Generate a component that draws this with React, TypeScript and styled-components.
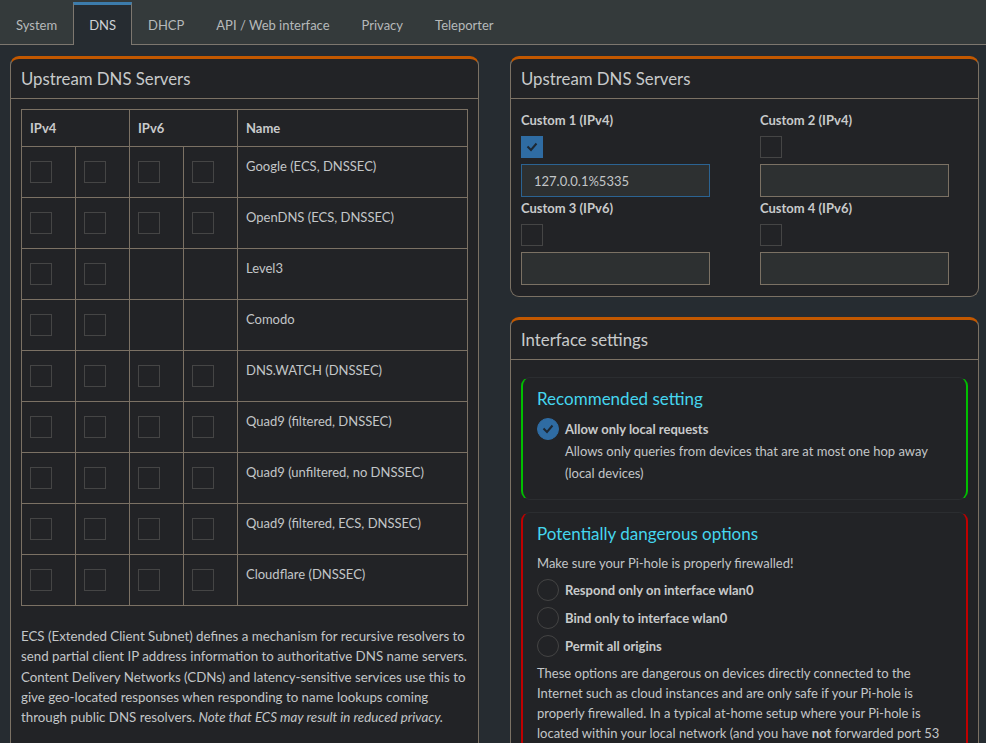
import React from 'react';
import styled, { createGlobalStyle } from 'styled-components';

const GlobalStyle = createGlobalStyle`
  body {
    margin: 0;
    background: #262c31;
    color: #c3c6c8;
    font-family: Lato, "Open Sans", sans-serif;
    font-size: 13px;
  }
`;

const TabBar = styled.div`
  display: flex;
  height: 45px;
  box-sizing: border-box;
  padding-top: 2px;
  background: #343a3b;
  border-bottom: 1px solid #7d776f;
`;

const Tab = styled.div<{ active?: boolean }>`
  display: flex;
  align-items: center;
  padding: 0 15px;
  margin-bottom: -1px;
  font-size: 13px;
  color: ${(p) => (p.active ? '#cdd2d6' : '#b6b9ba')};
  background: ${(p) => (p.active ? '#262c31' : 'transparent')};
  border-top: 3px solid ${(p) => (p.active ? '#3c7cac' : 'transparent')};
  border-left: 1px solid ${(p) => (p.active ? '#7d776f' : 'transparent')};
  border-right: 1px solid ${(p) => (p.active ? '#7d776f' : 'transparent')};
`;

const Content = styled.div`
  display: grid;
  grid-template-columns: 469px 469px;
  gap: 31px;
  padding: 11px 10px;
  align-items: start;
`;

const Column = styled.div`
  display: flex;
  flex-direction: column;
  gap: 20px;
`;

const Card = styled.div`
  background: #222326;
  border: 1px solid #7b7164;
  border-top: 3px solid #c25800;
  border-radius: 9px;
`;

const CardHeader = styled.div`
  height: 39px;
  display: flex;
  align-items: center;
  padding: 0 10px;
  font-size: 16.8px;
  color: #c8cacb;
  border-bottom: 1px solid #7b7164;
`;

const CardBody = styled.div<{ pt?: number; pb?: number }>`
  padding: ${(p) => p.pt ?? 10}px 10px ${(p) => p.pb ?? 10}px;
`;

const Table = styled.table`
  width: 100%;
  border-collapse: collapse;
  border: 1px solid #7b7164;
`;

const Th = styled.th`
  text-align: left;
  font-weight: 700;
  padding: 0 8px;
  height: 36px;
  border: 1px solid #7b7164;
  color: #c8cacb;
`;

const CheckCell = styled.td`
  width: 37px;
  padding: 14px 8px;
  border: 1px solid #7b7164;
  vertical-align: top;
`;

const NameCell = styled.td`
  padding: 9px 8px;
  border: 1px solid #7b7164;
  vertical-align: top;
  line-height: 20px;
`;

const Box = styled.div<{ checked?: boolean }>`
  width: 22px;
  height: 22px;
  box-sizing: border-box;
  border: 1px solid ${(p) => (p.checked ? '#2f6ca3' : '#454545')};
  background: ${(p) => (p.checked ? '#2f6ca3' : 'transparent')};
  display: flex;
  align-items: center;
  justify-content: center;
`;

const Note = styled.p`
  margin: 20px 0 0;
  font-size: 13.3px;
  line-height: 20.3px;
`;

const CustomGrid = styled.div`
  display: grid;
  grid-template-columns: 239px 1fr;
  row-gap: 1px;
`;

const CustomField = styled.div`
  display: flex;
  flex-direction: column;
  gap: 6px;
`;

const Label = styled.div`
  font-weight: 700;
  line-height: 20px;
  color: #c8cacb;
`;

const Input = styled.div<{ focused?: boolean }>`
  width: 189px;
  height: 33px;
  box-sizing: border-box;
  background: #2d3031;
  border: 1px solid ${(p) => (p.focused ? '#2b6392' : '#7b7164')};
  display: flex;
  align-items: center;
  padding: 0 12px;
  color: #c3c6c8;
`;

const OptionBox = styled.div<{ tone: string }>`
  border: 1px solid #2b2d30;
  border-left: 2px solid ${(p) => p.tone};
  border-right: 2px solid ${(p) => p.tone};
  border-radius: 9px;
  padding: 10px 14px 9px;
`;

const OptionTitle = styled.div`
  font-size: 17px;
  line-height: 22px;
  color: #45d6ee;
  margin-bottom: 8px;
`;

const Radio = styled.div<{ first?: boolean }>`
  display: grid;
  grid-template-columns: 22px 1fr;
  column-gap: 6px;
  align-items: center;
  margin-top: ${(p) => (p.first ? 3 : 0)}px;
  margin-bottom: 6px;
`;

const Circle = styled.div<{ checked?: boolean }>`
  width: 22px;
  height: 22px;
  box-sizing: border-box;
  border-radius: 50%;
  border: 1px solid ${(p) => (p.checked ? '#2f6ca3' : '#444')};
  background: ${(p) => (p.checked ? '#2f6ca3' : 'transparent')};
  display: flex;
  align-items: center;
  justify-content: center;
`;

const RadioLabel = styled.div`
  font-weight: 700;
  line-height: 22px;
  color: #c8cacb;
`;

const RadioDesc = styled.div`
  grid-column: 2;
  line-height: 22px;
`;

const Text = styled.div<{ mb?: number }>`
  line-height: 20px;
  margin-bottom: ${(p) => p.mb ?? 0}px;
`;

const Spacer = styled.div`
  height: 12px;
`;

const Tick = () => (
  <svg width="12" height="10" viewBox="0 0 12 10">
    <polyline points="1.5,4.5 5,8 10.5,1.5" fill="none" stroke="#1d2834" strokeWidth="2" />
  </svg>
);

const servers: { name: string; v6: boolean }[] = [
  { name: 'Google (ECS, DNSSEC)', v6: true },
  { name: 'OpenDNS (ECS, DNSSEC)', v6: true },
  { name: 'Level3', v6: false },
  { name: 'Comodo', v6: false },
  { name: 'DNS.WATCH (DNSSEC)', v6: true },
  { name: 'Quad9 (filtered, DNSSEC)', v6: true },
  { name: 'Quad9 (unfiltered, no DNSSEC)', v6: true },
  { name: 'Quad9 (filtered, ECS, DNSSEC)', v6: true },
  { name: 'Cloudflare (DNSSEC)', v6: true },
];

const tabs = ['System', 'DNS', 'DHCP', 'API / Web interface', 'Privacy', 'Teleporter'];

const customs = [
  { label: 'Custom 1 (IPv4)', value: '127.0.0.1%5335', checked: true },
  { label: 'Custom 2 (IPv4)', value: '', checked: false },
  { label: 'Custom 3 (IPv6)', value: '', checked: false },
  { label: 'Custom 4 (IPv6)', value: '', checked: false },
];

export default function App() {
  return (
    <>
      <GlobalStyle />
      <TabBar>
        {tabs.map((t) => (
          <Tab key={t} active={t === 'DNS'}>
            {t}
          </Tab>
        ))}
      </TabBar>
      <Content>
        <Card>
          <CardHeader>Upstream DNS Servers</CardHeader>
          <CardBody pb={30}>
            <Table>
              <thead>
                <tr>
                  <Th colSpan={2}>IPv4</Th>
                  <Th colSpan={2}>IPv6</Th>
                  <Th>Name</Th>
                </tr>
              </thead>
              <tbody>
                {servers.map((s) => (
                  <tr key={s.name}>
                    <CheckCell><Box /></CheckCell>
                    <CheckCell><Box /></CheckCell>
                    <CheckCell>{s.v6 && <Box />}</CheckCell>
                    <CheckCell>{s.v6 && <Box />}</CheckCell>
                    <NameCell>{s.name}</NameCell>
                  </tr>
                ))}
              </tbody>
            </Table>
            <Note>
              ECS (Extended Client Subnet) defines a mechanism for recursive resolvers to send partial
              client IP address information to authoritative DNS name servers. Content Delivery
              Networks (CDNs) and latency-sensitive services use this to give geo-located responses
              when responding to name lookups coming through public DNS resolvers.{' '}
              <em>Note that ECS may result in reduced privacy.</em>
            </Note>
          </CardBody>
        </Card>
        <Column>
          <Card>
            <CardHeader>Upstream DNS Servers</CardHeader>
            <CardBody pt={11} pb={11}>
              <CustomGrid>
                {customs.map((c) => (
                  <CustomField key={c.label}>
                    <Label>{c.label}</Label>
                    <Box checked={c.checked}>{c.checked && <Tick />}</Box>
                    <Input focused={c.checked}>{c.value}</Input>
                  </CustomField>
                ))}
              </CustomGrid>
            </CardBody>
          </Card>
          <Card>
            <CardHeader>Interface settings</CardHeader>
            <CardBody pt={17}>
              <OptionBox tone="#00c000">
                <OptionTitle>Recommended setting</OptionTitle>
                <Radio first>
                  <Circle checked><Tick /></Circle>
                  <RadioLabel>Allow only local requests</RadioLabel>
                  <RadioDesc>
                    Allows only queries from devices that are at most one hop away (local devices)
                  </RadioDesc>
                </Radio>
              </OptionBox>
              <Spacer />
              <OptionBox tone="#c00000">
                <OptionTitle>Potentially dangerous options</OptionTitle>
                <Text mb={6}>Make sure your Pi-hole is properly firewalled!</Text>
                <Radio>
                  <Circle />
                  <RadioLabel>Respond only on interface wlan0</RadioLabel>
                </Radio>
                <Radio>
                  <Circle />
                  <RadioLabel>Bind only to interface wlan0</RadioLabel>
                </Radio>
                <Radio>
                  <Circle />
                  <RadioLabel>Permit all origins</RadioLabel>
                </Radio>
                <Text>
                  These options are dangerous on devices directly connected to the Internet such as
                  cloud instances and are only safe if your Pi-hole is properly firewalled. In a
                  typical at-home setup where your Pi-hole is located within your local network (and
                  you have <strong>not</strong> forwarded port 53 in your router!) they are safe to
                  use.
                </Text>
              </OptionBox>
            </CardBody>
          </Card>
        </Column>
      </Content>
    </>
  );
}
